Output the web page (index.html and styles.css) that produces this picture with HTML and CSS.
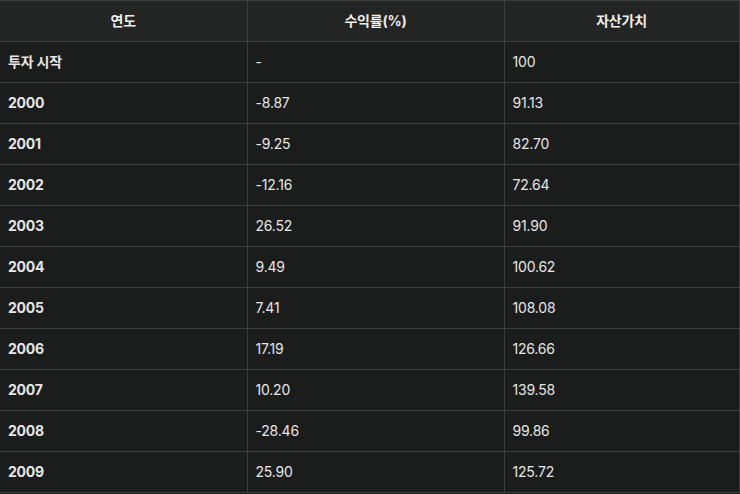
FILE: index.html
```html
<!DOCTYPE html>
<html lang="ko">
<head>
<meta charset="utf-8">
<link rel="stylesheet" href="styles.css">
</head>
<body>
<table class="returns">
  <colgroup>
    <col class="c1"><col class="c2"><col class="c3">
  </colgroup>
  <thead>
    <tr><th>연도</th><th>수익률(%)</th><th>자산가치</th></tr>
  </thead>
  <tbody>
    <tr><td class="year">투자 시작</td><td>-</td><td>100</td></tr>
    <tr><td class="year">2000</td><td>-8.87</td><td>91.13</td></tr>
    <tr><td class="year">2001</td><td>-9.25</td><td>82.70</td></tr>
    <tr><td class="year">2002</td><td>-12.16</td><td>72.64</td></tr>
    <tr><td class="year">2003</td><td>26.52</td><td>91.90</td></tr>
    <tr><td class="year">2004</td><td>9.49</td><td>100.62</td></tr>
    <tr><td class="year">2005</td><td>7.41</td><td>108.08</td></tr>
    <tr><td class="year">2006</td><td>17.19</td><td>126.66</td></tr>
    <tr><td class="year">2007</td><td>10.20</td><td>139.58</td></tr>
    <tr><td class="year">2008</td><td>-28.46</td><td>99.86</td></tr>
    <tr><td class="year">2009</td><td>25.90</td><td>125.72</td></tr>
  </tbody>
</table>
</body>
</html>
```
FILE: styles.css
```css
html, body {
  margin: 0;
  padding: 0;
  background: #1b1c1c;
}
body {
  font-family: Inter, "Noto Sans CJK KR", "Liberation Sans", sans-serif;
  font-size: 14px;
  color: #e6e6e6;
}
.returns {
  border-collapse: collapse;
  table-layout: fixed;
  width: 739px;
}
.c1 { width: 247px; }
.c2 { width: 257px; }
.c3 { width: 235px; }
.returns th,
.returns td {
  border: 1px solid #3d3e3e;
  height: 41px;
  padding: 0 8px;
  line-height: 20px;
  vertical-align: middle;
  box-sizing: border-box;
  letter-spacing: -0.2px;
}
.returns th:first-child,
.returns td:first-child {
  border-left: 0;
}
.returns th {
  background: #232424;
  font-weight: 700;
  text-align: center;
  color: #ececec;
}
.returns td {
  background: #1b1c1c;
  text-align: left;
  font-weight: 400;
}
.returns td.year {
  font-weight: 700;
}
```
